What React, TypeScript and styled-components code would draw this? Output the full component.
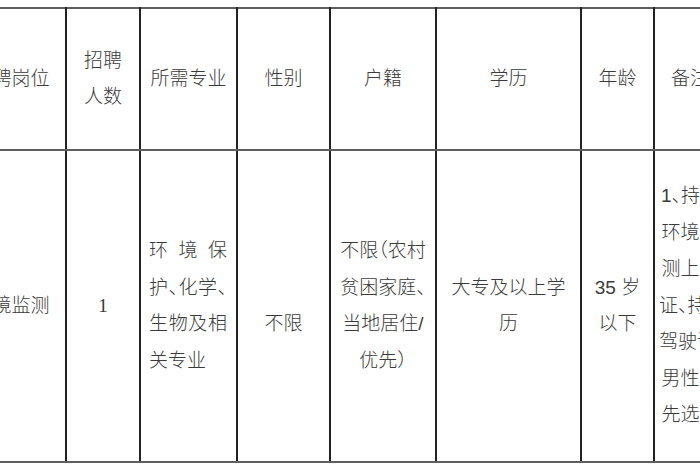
import React from 'react';
import styled, { createGlobalStyle } from 'styled-components';

const GlobalStyle = createGlobalStyle`
  html, body {
    margin: 0;
    background: #ffffff;
  }
  body {
    width: 700px;
    height: 470px;
    overflow: hidden;
    font-family: "Liberation Sans", "Noto Sans CJK SC", sans-serif;
  }
`;

const Sheet = styled.table`
  border-collapse: collapse;
  table-layout: fixed;
  width: 769px;
  margin: 7px 0 0 -44px;
  color: #3a3a3a;
  font-size: 19px;
  font-weight: 300;
  line-height: 36.5px;
  font-feature-settings: "halt";
`;

const Row = styled.tr<{ $height: number }>`
  height: ${(p) => p.$height}px;
`;

const Cell = styled.td<{ $align?: 'left' | 'center'; $drop?: boolean; $serif?: boolean }>`
  border-top: 2px solid #5e5e5e;
  border-bottom: 2px solid #5e5e5e;
  border-left: 2px solid #222222;
  border-right: 2px solid #222222;
  padding: ${(p) => (p.$drop ? '36px 4px 0' : '0 4px')};
  text-align: ${(p) => p.$align ?? 'center'};
  vertical-align: middle;
  white-space: nowrap;
  font-family: ${(p) => (p.$serif ? '"Liberation Serif", "Noto Serif CJK SC", serif' : 'inherit')};
`;

const MajorCell = styled(Cell)`
  padding: 0 9px 0 8px;
`;

const Line = styled.div<{ $spread?: boolean }>`
  white-space: ${(p) => (p.$spread ? 'normal' : 'nowrap')};
  text-align: ${(p) => (p.$spread ? 'justify' : 'inherit')};
  text-align-last: ${(p) => (p.$spread ? 'justify' : 'auto')};
`;

const widths = [109, 74, 97, 93, 106, 145, 73, 72];

const headers: string[][] = [
  ['招聘岗位'],
  ['招聘', '人数'],
  ['所需专业'],
  ['性别'],
  ['户籍'],
  ['学历'],
  ['年龄'],
  ['备注'],
];

const notes = ['1、持有', '环境监', '测上岗', '证、持有', '驾驶证；', '男性优', '先选用'];

function Lines({ items }: { items: string[] }) {
  return (
    <>
      {items.map((t, i) => (
        <Line key={i}>{t}</Line>
      ))}
    </>
  );
}

export default function App() {
  return (
    <>
      <GlobalStyle />
      <Sheet>
        <colgroup>
          {widths.map((w, i) => (
            <col key={i} style={{ width: w }} />
          ))}
        </colgroup>
        <tbody>
          <Row $height={142}>
            {headers.map((h, i) => (
              <Cell key={i}>
                <Lines items={h} />
              </Cell>
            ))}
          </Row>
          <Row $height={312}>
            <Cell>环境监测</Cell>
            <Cell $serif>1</Cell>
            <MajorCell $align="left">
              <Line $spread>环境保</Line>
              <Line $spread>护、化学、</Line>
              <Line $spread>生物及相</Line>
              <Line>关专业</Line>
            </MajorCell>
            <Cell $drop>不限</Cell>
            <Cell>
              <Lines items={['不限（农村', '贫困家庭、', '当地居住/', '优先）']} />
            </Cell>
            <Cell>
              <Lines items={['大专及以上学', '历']} />
            </Cell>
            <Cell>
              <Lines items={['35 岁', '以下']} />
            </Cell>
            <Cell>
              <Lines items={notes} />
            </Cell>
          </Row>
        </tbody>
      </Sheet>
    </>
  );
}
